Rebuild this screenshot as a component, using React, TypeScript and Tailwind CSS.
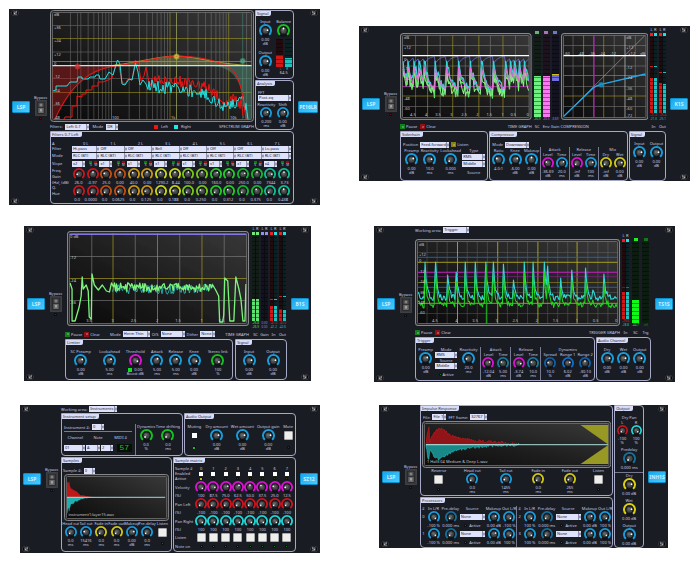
import React from "react";

const BLUE = "#1a9cd8";
const MAGENTA = "#dc12d2";
const GREEN = "#14c020";
const YELLOW = "#d0c818";
const RED = "#d01420";
const CYAN = "#20d8d8";

type Pt = [number, number];

function rnd(i: number) {
  const s = Math.sin(i * 127.1 + 11.7) * 43758.5453;
  return s - Math.floor(s);
}

function toPath(points: Pt[]) {
  return points.map(([x, y]) => `${x.toFixed(1)},${y.toFixed(1)}`).join(" ");
}

function along(points: Pt[], step: number, noise: number, seed: number): Pt[] {
  const out: Pt[] = [];
  for (let k = 0; k < points.length - 1; k++) {
    const [x0, y0] = points[k];
    const [x1, y1] = points[k + 1];
    for (let x = x0; x < x1; x += step) {
      const t = (x - x0) / (x1 - x0);
      out.push([x, y0 + (y1 - y0) * t + (rnd(x * 3.3 + seed) - 0.5) * noise]);
    }
  }
  return out;
}

function decays(peaks: Pt[], end: number, floor: number, tau: number, noise: number, seed: number): Pt[] {
  const out: Pt[] = [];
  peaks.forEach(([px, py], i) => {
    const stop = i < peaks.length - 1 ? peaks[i + 1][0] : end;
    for (let x = px; x < stop - 0.6; x += 1) {
      const y = floor - (floor - py) * Math.exp(-(x - px) / tau);
      out.push([x, x === px ? y : y + (rnd(x * 1.9 + seed) - 0.5) * noise]);
    }
  });
  return out;
}

/* ---------- small controls ---------- */

function Knob({ name, color = BLUE, size = "size-[13px]", turn = 60 }: { name: string; color?: string; size?: string; turn?: number }) {
  const a = ((turn - 90) * Math.PI) / 180;
  return (
    <span className={`relative block shrink-0 ${size}`}>
      <svg viewBox="0 0 26 26" className="block size-full">
        <circle cx="13" cy="13" r="10.5" fill="none" stroke="#101218" strokeWidth="5" />
        <path d="M6 21.5 A11 11 0 1 1 20 21.5" fill="none" stroke={color} strokeWidth="4" />
        <circle cx="13" cy="13" r="7.8" fill="#141618" />
        <circle cx="13" cy="13" r="6.2" fill="#444648" />
        <circle cx="12" cy="12" r="3" fill="#66686a" />
        <circle cx={13 + Math.cos(a) * 4} cy={13 + Math.sin(a) * 4} r="1.8" fill="#fff" />
      </svg>
      <input type="range" aria-label={name} defaultValue={50} className="absolute inset-0 size-full opacity-0" />
    </span>
  );
}

function Param({ label, value, unit, color, size, turn, grow = "flex-1" }: { label: string; value: string; unit?: string; color?: string; size?: string; turn?: number; grow?: string }) {
  return (
    <div className={`flex min-w-0 flex-col items-center ${grow}`}>
      <span className="leading-[5px]">{label}</span>
      <Knob name={label} color={color} size={size} turn={turn} />
      <span className="mt-px leading-[4px]">{value}</span>
      {unit && <span className="leading-[4px]">{unit}</span>}
    </div>
  );
}

function Pick({ name, value, width = "w-full" }: { name: string; value: string; width?: string }) {
  return (
    <span className={`flex h-[6px] shrink-0 bg-[#dfe2fb] text-[#20222c] ${width}`}>
      <select aria-label={name} className="h-[6px] min-w-0 flex-1 appearance-none pl-px text-[4px] leading-[6px]">
        <option>{value}</option>
      </select>
      <svg viewBox="0 0 6 12" className="h-[6px] w-[3px] border-l border-[#8d90aa]">
        <path d="M1 5 L3 1 L5 5Z M1 7 L3 11 L5 7Z" fill="#20222c" />
      </svg>
    </span>
  );
}

function Led({ color, glow = "size-px" }: { color: string; glow?: string }) {
  return (
    <span className="flex size-[3px] items-center justify-center rounded-full bg-[#0c0d10]">
      <span className={`rounded-full ${glow} ${color}`} />
    </span>
  );
}

function Lamp({ name, color, text }: { name: string; color: string; text?: string }) {
  return (
    <button className="flex items-center gap-px leading-[5px]" aria-label={name}>
      <span className={`flex size-[5px] items-center justify-center ${color}`}>
        <span className="size-[2px] bg-white/25" />
      </span>
      {text && <span>{text}</span>}
    </button>
  );
}

function PadButton({ name }: { name: string }) {
  return <button aria-label={name} className="size-[9px] rounded-[1px] border border-[#a9a9a9] bg-[#eeeeec]" />;
}

function Group({ title, className = "", body = "", children }: { title: string; className?: string; body?: string; children: React.ReactNode }) {
  return (
    <section className={`flex min-w-0 flex-col rounded-[4px] rounded-tl-none border border-[#a6a9c6] ${className}`}>
      <h3 className="h-[5px] self-start rounded-br-[2px] bg-[#d9dcf6] pr-[3px] pl-px leading-[5px] text-[#2a2c38]">{title}</h3>
      <div className={`min-w-0 flex-1 ${body}`}>{children}</div>
    </section>
  );
}

function Screw({ flip = false }: { flip?: boolean }) {
  return (
    <svg viewBox="0 0 16 12" className={`h-[6px] w-[8px] ${flip ? "-scale-x-100" : ""}`}>
      <ellipse cx="8" cy="6" rx="7.4" ry="5.6" fill="#050506" stroke="#5a5c62" strokeWidth="1" />
      <circle cx="8.6" cy="6" r="4" fill="#77797d" />
      <path d="M6 3 L11 9 M11.5 3 L5.5 8.5" stroke="#d4d4d4" strokeWidth="1.3" />
      <path d="M8 1 L8 6 L12 8" stroke="#111" strokeWidth="1.4" fill="none" />
    </svg>
  );
}

function Badge({ text, width = "w-[18px]" }: { text: string; width?: string }) {
  return (
    <div className={`flex h-[12px] items-center justify-center rounded-[1px] border border-[#0c90cc] bg-linear-to-br from-[#14a8ec] to-[#48caff] text-[5px] leading-[6px] font-bold text-[#c8f0ff] ${width}`}>
      {text}
    </div>
  );
}

function Plugin({ name, badge, className, children }: { name: string; badge?: string; className: string; children: React.ReactNode }) {
  return (
    <article className={`flex min-w-0 bg-[#1a1c24] ${className}`}>
      <div className="flex w-[41px] shrink-0 flex-col justify-between pt-px pb-px pl-[2px]">
        <Screw />
        <div className="flex items-center gap-[4px] pl-px">
          <Badge text="LSP" />
          <label className="flex flex-col items-center">
            <span className="leading-[5px]">Bypass</span>
            <input type="checkbox" className="peer sr-only" />
            <svg viewBox="0 0 24 32" className="h-[16px] w-[12px]">
              <rect x="0.5" y="0.5" width="23" height="31" rx="2" fill="#38393b" stroke="#5c5d5e" />
              <rect x="5" y="4" width="14" height="23" fill="#1c1d20" />
              <rect x="6.5" y="5" width="11" height="10" fill="#4a4b4d" />
              <rect x="6.5" y="16" width="11" height="10" fill="#68696b" />
              <circle cx="12" cy="10" r="2" fill="none" stroke="#c8c8c8" />
              <path d="M12 18 V23" stroke="#d8d8d8" strokeWidth="2" />
            </svg>
            <span className="mt-px">
              <Led color="bg-[#a01818]" />
            </span>
          </label>
        </div>
        <Screw />
      </div>
      <div className="flex min-w-0 flex-1 flex-col">{children}</div>
      <div className={`flex shrink-0 flex-col items-end justify-between py-px pr-[2px] ${badge ?? "w-[24px]"}`}>
        <Screw flip />
        <Badge text={name} width={badge ? "w-[20px]" : "w-[18px]"} />
        <Screw flip />
      </div>
    </article>
  );
}

/* ---------- level meters ---------- */

function Bar({ color, dim, level, peak }: { color: string; dim: string; level: string; peak?: string }) {
  return (
    <div className={`relative flex min-w-0 flex-1 flex-col justify-end ${dim}`}>
      <div className={`${color} ${level}`} />
      {peak && <div className={`absolute inset-x-0 h-px ${color} ${peak}`} />}
      <div className="absolute inset-0 bg-[repeating-linear-gradient(to_top,transparent_0_3px,#00000068_3px_4px)]" />
    </div>
  );
}

function Meter({ label, caps, led, bars, values, width = "w-[7px]" }: { label: string; caps?: boolean; led: string[]; bars: React.ReactNode; values: [string, string][]; width?: string }) {
  return (
    <div className={`flex shrink-0 flex-col items-center ${width}`}>
      {caps && (
        <div className="flex w-full justify-around leading-[4px]">
          <span>L</span>
          <span>R</span>
        </div>
      )}
      <div className="flex w-full justify-around py-px">
        {led.map((c, i) => (
          <span key={i} className={`h-[3px] ${led.length > 1 ? "w-[3px]" : "w-[4px]"} ${c}`} />
        ))}
      </div>
      <div className="flex w-full flex-1 gap-px bg-[#0b0c10]">{bars}</div>
      <div className="flex flex-col items-center text-[3px] leading-[4px]">
        {values.map(([v, c], i) => (
          <span key={i} className={c}>{v}</span>
        ))}
      </div>
      <span className="mt-[3px] leading-[5px] whitespace-nowrap">{label}</span>
    </div>
  );
}

/* ---------- graphs ---------- */

function Scope({ x, y, w, h, className, id, title, children }: { x: number; y: number; w: number; h: number; className: string; id: string; title: string; children: React.ReactNode }) {
  return (
    <svg viewBox={`${x} ${y} ${w} ${h}`} preserveAspectRatio="none" className={`block w-full shrink-0 ${className}`} role="img" aria-label={title}>
      <defs>
        <linearGradient id={id} x1="0" y1="1" x2="1" y2="0">
          <stop offset="0" stopColor="#0c0c0d" />
          <stop offset="0.45" stopColor="#1e1e1f" />
          <stop offset="1" stopColor="#393939" />
        </linearGradient>
        <clipPath id={`${id}c`}>
          <rect x={x + 2.5} y={y + 2.5} width={w - 5} height={h - 5} />
        </clipPath>
      </defs>
      <rect x={x + 0.5} y={y + 0.5} width={w - 1} height={h - 1} rx="3" fill="#2a2a2c" stroke="#85878a" />
      <rect x={x + 2.5} y={y + 2.5} width={w - 5} height={h - 5} rx="1" fill={`url(#${id})`} stroke="#727272" strokeWidth="0.8" />
      <g clipPath={`url(#${id}c)`}>{children}</g>
    </svg>
  );
}

function Lines({ v = [], h = [], x, y, color, o = 1, w = 0.7 }: { v?: number[]; h?: number[]; x: Pt; y: Pt; color: string; o?: number; w?: number }) {
  return (
    <g stroke={color} strokeWidth={w} opacity={o}>
      {v.map((k) => <line key={`v${k}`} x1={k} x2={k} y1={y[0]} y2={y[1]} />)}
      {h.map((k) => <line key={`h${k}`} x1={x[0]} x2={x[1]} y1={k} y2={k} />)}
    </g>
  );
}

function Marks({ items }: { items: [number, number, string][] }) {
  return (
    <g fill="#c4c6cc" fontSize="4">
      {items.map(([x, y, t]) => <text key={`${x}-${y}`} x={x} y={y}>{t}</text>)}
    </g>
  );
}

function Node({ x, y, color }: { x: number; y: number; color: string }) {
  return (
    <g>
      <circle cx={x} cy={y} r="3" fill={color} opacity="0.55" />
      <circle cx={x} cy={y} r="1.5" fill="none" stroke={color} />
    </g>
  );
}

function Trace({ pts, color, w = 0.8, o = 1 }: { pts: Pt[]; color: string; w?: number; o?: number }) {
  return <polyline points={toPath(pts)} fill="none" stroke={color} strokeWidth={w} opacity={o} strokeLinejoin="round" />;
}

function SpectrumGraph() {
  const X: Pt = [52, 252];
  const Y: Pt = [12, 120];
  const grid: number[] = [];
  for (let d = 0; d < 4; d++) for (let k = 2; k < 10; k++) grid.push(52.8 + 58.7 * (d + Math.log10(k)));
  const red: Pt[] = [
    [64, 119], [65, 117], [72, 117], [72, 106], [77, 106], [77, 96], [82, 97], [82, 94], [86, 94], [86, 90], [92, 90], [92, 86], [98, 86], [98, 82], [103, 82], [108, 80], [112, 78], [116, 64], [119, 66], [122, 82], [125, 84], [128, 79], [132, 80], [135.5, 60], [139, 68], [141, 81], [144, 76], [146, 67], [149, 82],
    ...along([[151, 79], [180, 82], [205, 87], [216, 95], [226, 105], [234, 99], [241, 104], [245, 119]], 1, 13, 4),
  ];
  const cyan: Pt[] = [
    [53, 91], [56, 90], [56, 86], [67, 86], [70, 82], [77, 82], [78, 77], [82, 77], [82, 79], [88, 79], [90, 77], [95, 77], [96, 75], [99, 75], [100, 79], [105, 79], [109, 72], [113, 75], [117.5, 60], [120, 64], [122, 84], [125, 85], [129, 79], [132, 80], [135.5, 63], [138, 72], [140, 85], [143, 80], [146, 84],
    ...along([[148, 86], [175, 89], [205, 93], [216, 101], [226, 108], [235, 104], [242, 98], [249, 117]], 1, 13, 30),
  ];
  return (
    <Scope x={50} y={10} w={204} h={112} className="h-[112px]" id="g1" title="Spectrum graph">
      <Lines v={grid} h={[25.5, 52, 78.5, 105.5]} x={X} y={Y} color="#8a8a8a" o={0.6} w={0.7} />
      <Lines v={[111.5, 170, 228.7]} h={[38.5, 92.5]} x={X} y={Y} color="#b0a820" o={0.75} />
      <Lines v={[77.5]} x={X} y={Y} color="#c03030" />
      <Lines v={[176.5]} x={X} y={Y} color="#a8b060" />
      <Lines v={[242.7]} x={X} y={Y} color="#3c7a6a" />
      <path d="M52 66 H118 C90 70 72 86 55 120 H52Z" fill="#c81c1c" opacity="0.38" />
      <path d="M112 66 C140 62 160 56 177 56 C200 57 215 64 250 65.7Z" fill="#98a060" opacity="0.42" />
      <path d="M210 66 H252 V120 H246 C243 90 240 66 210 66Z" fill="#5a9a80" opacity="0.42" />
      <Trace pts={red} color="#f01414" w={1} />
      <Trace pts={cyan} color="#20e0e0" w={1} />
      <path d="M112 65.5 C140 62 160 56 177 56 C200 57 215 64 252 65.5" fill="none" stroke="#c8c040" strokeWidth="0.7" />
      <path d="M55 119 C72 82 90 70 115 66 C140 63 160 56 177 56.2 C200 56 222 62 232 69 C242 80 243 100 246 120" fill="none" stroke="#f01818" strokeWidth="1" />
      <Lines h={[61.5]} x={X} y={Y} color="#50b890" />
      <Lines h={[65.7]} x={X} y={Y} color="#b0f0f0" w={1.2} />
      <Node x={77.5} y={66.5} color="#e03030" />
      <Node x={176.5} y={56.5} color="#c8c840" />
      <Node x={242.7} y={61} color="#50a888" />
      <Marks items={[[54, 16, "dB"], [54, 29, "+36"], [54, 42, "+24"], [54, 56, "+12"], [54, 65, "0"], [54, 78, "-12"], [54, 92, "-24"], [54, 105, "-36"], [54, 119, "-48"], [112, 118.5, "100"], [171, 118.5, "1k"], [230, 118.5, "10k"]]} />
    </Scope>
  );
}

function CompressorTimeGraph() {
  const X: Pt = [402, 529];
  const Y: Pt = [34, 116];
  const on = [403, 408, 414, 419, 424.3, 435, 446.5, 458.3, 470, 481, 493, 505, 510, 514, 519, 524];
  const from = (top: number) => on.map((p) => [p, top] as Pt);
  const gain: Pt[] = decays(from(62), 529, 58, 1, 0, 0).map(([px]) => {
    const start = on.filter((p) => p <= px).pop() ?? on[0];
    return [px, 55 + 8 * Math.exp(-(px - start) / 4)];
  });
  return (
    <Scope x={400} y={32} w={131} h={87} className="h-[87px]" id="g2" title="Time graph">
      <Lines v={[415.5, 440, 465, 490, 515]} h={[44.5, 65, 85.5, 105.5]} x={X} y={Y} color="#8a8a8a" o={0.7} />
      <Lines v={[427.5, 452.5, 478.5, 502.5]} h={[74.5, 95]} x={X} y={Y} color="#b0a820" o={0.8} />
      <Lines h={[85.7]} x={X} y={Y} color="#c020b8" />
      <Trace pts={gain} color="#6c70e0" />
      <Trace pts={decays(from(68), 529, 95, 5, 12, 3)} color="#60e060" w={1.3} />
      <Trace pts={decays(from(60), 529, 91, 4.5, 11, 9)} color="#30d8d8" w={1.2} />
      <Trace pts={decays(from(72), 529, 94, 4, 10, 19)} color="#80f080" w={1} />
      <Trace pts={decays(from(66), 529, 91, 5, 2, 5)} color="#e868d8" w={1} />
      <Lines h={[54.7]} x={X} y={Y} color="#ffffff" w={1.3} />
      <Marks items={[[404, 38, "dB"], [404, 48, "+12"], [404, 60, "0"], [404, 69, "-12"], [404, 79, "-24"], [404, 99, "-48"], [404, 109, "-60"], [410, 115.5, "4.5"], [425, 115.5, "4"], [435, 115.5, "3.5"], [450, 115.5, "3"], [461, 115.5, "2.5"], [476, 115.5, "2"], [486, 115.5, "1.5"], [501, 115.5, "1"], [510, 115.5, "0.5"], [526, 115.5, "0"]]} />
    </Scope>
  );
}

function CurveGraph() {
  const X: Pt = [562, 645];
  const Y: Pt = [34, 117];
  return (
    <Scope x={560} y={32} w={87} h={87} className="h-[87px]" id="g3" title="Compression curve">
      <Lines v={[572, 592.7, 613, 634]} h={[44.5, 65, 85.5, 105.5]} x={X} y={Y} color="#8a8a8a" o={0.7} />
      <Lines v={[582.5, 602.5]} h={[74.5, 95]} x={X} y={Y} color="#b0a820" o={0.8} />
      <Lines v={[592.7]} x={X} y={Y} color="#c818c0" w={1.1} />
      <Lines v={[623.7]} x={X} y={Y} color="#c8c8c8" />
      <line x1="562" y1="116" x2="645" y2="33" stroke="#9a9a9a" strokeWidth="0.7" />
      <path d="M562.5 115.5 L592 87 Q595 84.6 600 83.4 L644 73" fill="none" stroke="#20a8e8" strokeWidth="1.3" />
      <Node x={600} y={83.7} color="#1890c8" />
      <Lines h={[54.7]} x={X} y={Y} color="#ffffff" w={1.3} />
      <Marks items={[[625, 38, "dB"], [625, 48, "+12"], [563, 54, "-60"], [577, 54, "-48"], [588, 54, "-36"], [598, 54, "-24"], [609, 54, "-12"], [627, 54, "+12"], [639, 54, "dB"], [625, 68, "-12"], [625, 78, "-24"], [625, 89, "-36"], [625, 99, "-48"], [625, 109, "-60"], [625, 116, "-72"]]} />
    </Scope>
  );
}

function LimiterGraph() {
  const X: Pt = [69, 245];
  const Y: Pt = [234, 325];
  const pts: Pt[] = [
    [70, 284], [72, 290], [72, 322], [75, 322], [79, 308], [81, 297], [82, 278], [83, 290], [86, 286], [88, 292], [89, 318], [91, 320], [91.7, 275], [94, 286], [98, 291], [102, 286], [106, 292], [109, 293], [111, 284],
    ...along([[113, 288], [160, 289], [212, 288]], 1, 9, 2),
    [214, 291], [217, 297], [218, 323], [221, 323], [222, 316], [223, 279], [226, 282], [228, 322], [232, 322], [234, 278], [237, 290], [239, 300], [241, 322], [243, 322], [244, 285],
  ];
  return (
    <Scope x={67} y={232} w={180} h={95} className="h-[95px]" id="g4" title="Time graph">
      <Lines v={[91.5, 134.5, 178.5, 222.5]} h={[257.5, 301.5]} x={X} y={Y} color="#8a8a8a" o={0.8} />
      <Lines v={[112.5, 156.5, 200.5]} h={[279.5]} x={X} y={Y} color="#b0a820" o={0.9} />
      <Trace pts={along([[112, 290], [160, 291], [212, 289]], 1, 9, 8)} color="#28c8c8" />
      <Trace pts={pts} color="#7cf47c" w={1.3} />
      <Lines h={[235.5]} x={X} y={Y} color="#8078e0" w={1.2} />
      <Marks items={[[70, 239, "0 dB"], [70, 260, "-12"], [70, 283, "-24"], [70, 305, "-36"], [86, 323.5, "3.5"], [111, 323.5, "3"], [130, 323.5, "2.5"], [155, 323.5, "2"], [174, 323.5, "1.5"], [199, 323.5, "1"], [217, 323.5, "0.5"]]} />
    </Scope>
  );
}

function TriggerGraph() {
  const X: Pt = [418, 617];
  const Y: Pt = [242, 324];
  const peaks: Pt[] = [[418, 292], [425, 262], [435.5, 262], [447.5, 275], [456, 272], [465, 262], [475, 262], [485.5, 262], [493, 262], [503, 264], [513, 280], [523.7, 262], [532.5, 262], [543.7, 262], [547, 266], [560, 278], [571, 270], [584.7, 268], [592, 290], [603, 274]];
  return (
    <Scope x={415} y={239} w={204} h={87} className="h-[87px]" id="g5" title="Trigger graph">
      <Lines v={[427, 437, 447, 467, 477, 487, 507, 517, 527, 547, 557, 567, 587, 597, 607]} h={[252.5, 292.5, 313.5]} x={X} y={Y} color="#8a8a8a" o={0.5} w={0.6} />
      <Lines v={[457.3, 497.3, 537.3, 576.3]} h={[262.3, 303.3]} x={X} y={Y} color="#c0b820" o={0.9} w={0.9} />
      <Lines h={[257.3, 287.3]} x={X} y={Y} color="#2068b0" w={0.9} />
      <Lines h={[272.3]} x={X} y={Y} color="#c820c0" w={1} />
      <Lines h={[276.7]} x={X} y={Y} color="#802080" w={0.8} />
      <Lines h={[282.5]} x={X} y={Y} color="#807020" w={0.8} />
      <Trace pts={decays(peaks, 617, 298, 1.6, 6, 6)} color="#30d8d8" w={1.1} />
      <Trace pts={decays(peaks.map(([x, y]) => [x, y + 10] as Pt), 617, 305, 1.5, 6, 14)} color="#20d820" w={1} />
      <line x1="486" y1="265" x2="486" y2="324" stroke="#20b820" />
      <Marks items={[[419, 246, "dB"], [419, 256, "+12"], [419, 262, "0"], [419, 273, "-12"], [419, 283, "-24"], [419, 294, "-36"], [419, 304, "-48"], [419, 314, "-60"], [432, 322.5, "4.5"], [455, 322.5, "4"], [472, 322.5, "3.5"], [495, 322.5, "3"], [512, 322.5, "2.5"], [535, 322.5, "2"], [552, 322.5, "1.5"], [575, 322.5, "1"], [592, 322.5, "0.5"], [614, 322.5, "0"]]} />
    </Scope>
  );
}

function envelope(x0: number, x1: number, mid: number, amp: number, tau: number, seed: number, dir: number): string {
  const pts: Pt[] = [[x0, mid]];
  for (let x = x0; x <= x1; x += 0.5) {
    const a = amp * Math.exp(-(x - x0) / tau) * (0.65 + 0.5 * rnd(Math.floor(x) * 2.7 + seed));
    pts.push([x, mid + dir * a]);
  }
  pts.push([x1, mid]);
  return toPath(pts);
}

function SampleGraph() {
  return (
    <Scope x={63} y={474} w={107} h={47} className="h-[47px]" id="g6" title="Sample waveform">
      <polygon points={envelope(66, 110, 497.3, 21, 7, 2, -1)} fill="#c01818" />
      <polygon points={envelope(66, 110, 497.3, 18, 7, 8, 1)} fill="#20b0b0" />
      <Lines h={[497.3]} x={[66, 166]} y={[0, 0]} color="#a8f0f0" w={0.9} />
      <Marks items={[[67.5, 516, "instrument1:layer15.wav"]]} />
    </Scope>
  );
}

function ImpulseGraph() {
  const top: Pt[] = [[426, 444], [427, 436], [428, 432], [429, 426], [430, 443], [432, 436], [434, 434], [437, 430], [440, 428], [444, 430], [450, 435], [458, 438], [470, 440], [490, 442], [520, 444]];
  const low: Pt[] = [[426, 445], [427, 452], [428, 458], [429, 459], [430, 450], [434, 456], [439, 460], [444, 456], [450, 453], [458, 450], [470, 448], [490, 446], [520, 445]];
  return (
    <Scope x={422} y={421} w={191} h={47} className="h-[47px]" id="g7" title="Impulse response waveform">
      <polygon points={`426,444.7 ${toPath(along(top, 0.8, 3, 3))} 520,444.7`} fill="#901418" stroke="#e01c1c" strokeWidth="0.5" />
      <polygon points={`426,444.7 ${toPath(along(low, 0.8, 2.6, 7))} 520,444.7`} fill="#188888" stroke="#30d0d0" strokeWidth="0.5" />
      <polygon points="582,425 610,425 610,444.5" fill="#989824" />
      <polygon points="582,464 610,464 610,445" fill="#989824" />
      <Lines h={[444.7]} x={[426, 610]} y={[0, 0]} color="#b8f4f0" w={0.9} />
      <Marks items={[[427, 463.5, "1 Halls 04 Medium & Deep L.wav"]]} />
    </Scope>
  );
}

/* ---------- plugins ---------- */

const FILTERS = [
  { t: "Hi-pass", s: "x2", c: "#c81820", a: "26.0", b: "-0.97", q: "0.0", m: "0.0000" },
  { t: "Off", s: "x1", c: "#c05014", a: "25.0", b: "0.00", q: "0.0", m: "0.0625" },
  { t: "Off", s: "x1", c: "#c89818", a: "40.0", b: "0.00", q: "0.0", m: "0.125" },
  { t: "Bell", s: "x1", c: "#c8d818", a: "1290.2", b: "8.44", q: "0.0", m: "0.188" },
  { t: "Off", s: "x1", c: "#78c818", a: "100.0", b: "0.00", q: "0.0", m: "0.250" },
  { t: "Off", s: "x1", c: "#20d028", a: "160.0", b: "0.00", q: "0.0", m: "0.312" },
  { t: "Off", s: "x1", c: "#14b830", a: "250.0", b: "0.00", q: "0.0", m: "0.375" },
  { t: "Lo-pass", s: "x4", c: "#10c090", a: "7344", b: "3.73", q: "0.0", m: "0.438" },
];

function Equalizer() {
  return (
    <Plugin name="PE16LR" badge="w-[26px]" className="flex-[311]">
      <div className="flex pt-px">
        <div className="min-w-0 flex-[204]">
          <SpectrumGraph />
          <div className="flex h-[9px] items-center gap-[3px] leading-[5px]">
            <span>Filters:</span>
            <Pick name="Filters" value="Left 0-7" width="w-[24px]" />
            <span>Mode</span>
            <Pick name="Mode" value="IIR" width="w-[12px]" />
            <span className="ml-auto size-[4px] bg-[#f01414]" />
            <span>Left</span>
            <span className="ml-[3px] size-[4px] bg-[#20e8e8]" />
            <span>Right</span>
            <span className="ml-[25px]">SPECTRUM GRAPH</span>
          </div>
        </div>
        <div className="ml-px flex min-w-0 flex-[39] flex-col gap-px">
          <Group title="Signal" className="h-[69px]" body="flex pt-[3px]">
            <div className="flex flex-1 flex-col gap-[2px]">
              <Param label="Input" value="0.00" unit="dB" turn={80} />
              <Param label="Output" value="0.00" unit="dB" turn={80} />
            </div>
            <div className="flex flex-1 flex-col items-center">
              <span className="leading-[5px]">Balance</span>
              <Knob name="Balance" color={GREEN} turn={0} />
              <div className="mt-[2px] flex h-[28px] w-[16px] gap-[2px]">
                <Bar color="bg-[#d01818]" dim="bg-[#200c0e]" level="h-[12px]" />
                <Bar color="bg-[#20c0c0]" dim="bg-[#0a2022]" level="h-[9px]" />
              </div>
              <div className="flex w-[14px] justify-around text-[3px] leading-[4px]">
                <span className="text-[#e02020]">L</span>
                <span className="text-[#20d0d0]">R</span>
              </div>
              <span className="leading-[4px]">64.5</span>
            </div>
          </Group>
          <Group title="Analysis" className="h-[50px]" body="flex flex-col px-[2px] pt-[4px]">
            <span className="leading-[5px]">FFT</span>
            <Pick name="FFT" value="Post-eq" />
            <div className="flex pt-px">
              <Param label="Reactivity" value="0.200" unit="ms" size="size-[12px]" turn={60} />
              <Param label="Shift" value="0.00" unit="dB" size="size-[12px]" turn={50} />
            </div>
          </Group>
        </div>
      </div>
      <Group title="Filters 0-7 Left" className="mb-px" body="flex pt-[4px] pb-px pl-px pr-[2px]">
        <div className="flex w-[20px] shrink-0 flex-col leading-[5px]">
          <span>A</span>
          <span className="h-[6px] leading-[6px]">Filter</span>
          <span className="mt-px h-[6px] leading-[6px]">Mode</span>
          <span className="h-[9px] leading-[9px]">Slope</span>
          <span>Freq.</span>
          <span className="h-[7px] leading-[7px]">Gain</span>
          <span className="whitespace-nowrap">(Hz), (dB)</span>
          <span>Q.</span>
          <span className="h-[7px] leading-[7px]">Hue</span>
        </div>
        {FILTERS.map((f, i) => (
          <div key={i} className="flex min-w-0 flex-1 flex-col">
            <span className="text-center leading-[5px]">{i} L</span>
            <Pick name={`Filter ${i}`} value={f.t} />
            <span className="mt-px">
              <Pick name={`Filter ${i} mode`} value="RLC (BT)" />
            </span>
            <div className="flex h-[9px] items-center justify-between pr-[2px]">
              <Pick name={`Filter ${i} slope`} value={f.s} width="w-[13px]" />
              <div className="flex gap-[2px] text-[3px] leading-[3px]">
                <label className="flex flex-col items-center">
                  <input type="checkbox" className="size-[3px] appearance-none bg-[#0a7a14]" />S
                </label>
                <label className="flex flex-col items-center">
                  <input type="checkbox" className="size-[3px] appearance-none bg-[#901018]" />M
                </label>
              </div>
            </div>
            <div className="flex justify-around">
              <Knob name="Frequency" color={f.c} size="size-[12px]" turn={-100 + i * 28} />
              <Knob name="Gain" color={f.c} size="size-[12px]" turn={0} />
            </div>
            <div className="flex justify-around leading-[5px]">
              <span>{f.a}</span>
              <span>{f.b}</span>
            </div>
            <div className="flex justify-around">
              <Knob name="Quality" color={f.c} size="size-[12px]" turn={-135} />
              <Knob name="Hue" color={f.c} size="size-[12px]" turn={-135 + i * 18} />
            </div>
            <div className="flex justify-around leading-[5px]">
              <span>{f.q}</span>
              <span>{f.m}</span>
            </div>
          </div>
        ))}
      </Group>
    </Plugin>
  );
}

function Pair({ title, items, grow = "flex-[28]", size = "size-[12px]" }: { title: string; grow?: string; size?: string; items: [string, string, string, string?, number?][] }) {
  return (
    <div className={`flex min-w-0 flex-col border-l border-[#777a90] ${grow}`}>
      <span className="text-center leading-[5px]">{title}</span>
      <div className="flex">
        {items.map(([l, v, u, c, t]) => (
          <Param key={l} label={l} value={v} unit={u} color={c} size={size} turn={t} />
        ))}
      </div>
    </div>
  );
}

const RED_BAR = "bg-[#d01818]";
const CYAN_BAR = "bg-[#20c0c0]";
const RED_DIM = "bg-[#200c0e]";
const CYAN_DIM = "bg-[#0a2022]";

function Compressor() {
  return (
    <Plugin name="K1S" className="mt-[17px] flex-[331]">
      <div className="flex items-end gap-[2px] pt-[2px] pb-[2px]">
        <div className="min-w-0 flex-[131]">
          <CompressorTimeGraph />
          <div className="mt-[4px] flex items-center gap-[3px] leading-[5px]">
            <Lamp name="Pause" color="bg-[#108018]" text="Pause" />
            <Lamp name="Clear" color="bg-[#901018]" text="Clear" />
            <span className="ml-auto">TIME GRAPH</span>
          </div>
        </div>
        <div className="flex h-[99px] gap-[2px]">
          <Meter label="SC" led={["bg-[#60b868]"]} values={[["-20.9", "text-[#50e050]"]]} bars={<Bar color="bg-[#70f080]" dim="bg-[#131d18]" level="h-[41px]" />} />
          <Meter label="Env" led={["bg-[#b070b8]"]} values={[["-20.5", "text-[#e060e0]"]]} bars={<Bar color="bg-[#f878f0]" dim="bg-[#1d131e]" level="h-[41px]" />} />
          <Meter label="Gain" led={["bg-[#7078c0]"]} values={[["-3.69", "text-[#8080e8]"]]} bars={<Bar color="bg-[#7070e0]" dim="bg-[#13131f]" level="mb-[36px] h-[7px] border-t border-[#d0c020]" />} />
        </div>
        <div className="min-w-0 flex-[87]">
          <CurveGraph />
          <div className="mt-[4px] leading-[5px]">COMPRESSION</div>
        </div>
        <div className="flex h-[101px] gap-[2px]">
          <Meter label="In" caps led={["bg-[#f02020]", "bg-[#20e0e0]"]} values={[["-21.2", "text-[#e02020]"], ["-21.0", "text-[#20c0c0]"]]} bars={<><Bar color={RED_BAR} dim={RED_DIM} level="h-[35px]" peak="bottom-[46px]" /><Bar color={CYAN_BAR} dim={CYAN_DIM} level="h-[35px]" peak="bottom-[46px]" /></>} />
          <Meter label="Out" caps led={["bg-[#f02020]", "bg-[#20e0e0]"]} values={[["-25.4", "text-[#e02020]"], ["-25.1", "text-[#20c0c0]"]]} bars={<><Bar color={RED_BAR} dim={RED_DIM} level="h-[30px]" peak="bottom-[40px]" /><Bar color={CYAN_BAR} dim={CYAN_DIM} level="h-[29px]" peak="bottom-[40px]" /></>} />
        </div>
      </div>
      <div className="flex h-[50px] gap-px">
        <Group title="Sidechain" className="flex-[88]" body="flex flex-col pt-[4px] px-[2px]">
          <div className="flex h-[7px] items-center gap-[2px] leading-[5px]">
            <span>Position</span>
            <Pick name="Position" value="Feed-forward" width="w-[29px]" />
            <Lamp name="Listen" color="bg-[#888010]" text="Listen" />
          </div>
          <div className="flex">
            <Param label="Preamp" value="0.00" unit="dB" grow="flex-[17]" />
            <Param label="Reactivity" value="10.0" unit="ms" turn={80} grow="flex-[19]" />
            <Param label="Lookahead" value="0.000" unit="ms" turn={-140} grow="flex-[23]" />
            <div className="flex min-w-0 flex-[23] flex-col items-center gap-px">
              <span className="leading-[5px]">Type</span>
              <Pick name="Type" value="RMS" />
              <Pick name="Source" value="Middle" />
              <span className="mt-[2px] leading-[5px]">Source</span>
            </div>
          </div>
        </Group>
        <Group title="Compressor" className="flex-[139]" body="flex pt-[4px]">
          <div className="flex min-w-0 flex-[50] flex-col">
            <div className="flex h-[7px] items-center gap-[2px] pl-[2px] leading-[5px]">
              <span>Mode</span>
              <Pick name="Mode" value="Downward" width="w-[24px]" />
            </div>
            <div className="flex">
              <Param label="Ratio" value="4.0:1" turn={-60} />
              <Param label="Knee" value="-6.00" unit="dB" turn={60} />
              <Param label="Makeup" value="0.00" unit="dB" turn={0} />
            </div>
          </div>
          <div className="flex min-w-0 flex-[88] pt-[6px]">
            <Pair title="Attack" items={[["Level", "-36.69", "dB", MAGENTA, -60], ["Time", "20.0", "ms", BLUE, 50]]} />
            <Pair title="Release" items={[["Level", "-inf", "dB", MAGENTA, -135], ["Time", "100", "ms", BLUE, 70]]} />
            <Pair title="Mix" items={[["Dry", "-inf", "dB", YELLOW, -135], ["Wet", "0.00", "dB", YELLOW, 80]]} />
          </div>
        </Group>
        <Group title="Signal" className="flex-[36]" body="flex pt-[4px] pl-px">
          <Param label="Input" value="0.00" unit="dB" turn={80} />
          <Param label="Output" value="0.00" unit="dB" turn={80} />
        </Group>
      </div>
    </Plugin>
  );
}

function Limiter() {
  return (
    <Plugin name="B1S" className="flex-[287] self-start">
      <div className="flex items-end gap-[3px] pt-px pb-[2px]">
        <div className="min-w-0 flex-1">
          <div className="pl-[2px]">
            <LimiterGraph />
          </div>
          <div className="mt-[5px] flex h-[6px] items-center gap-[2px] leading-[5px] whitespace-nowrap">
            <Lamp name="Pause" color="bg-[#108018]" text="Pause" />
            <Lamp name="Clear" color="bg-[#901018]" text="Clear" />
            <span className="ml-auto">Mode</span>
            <Pick name="Mode" value="Herm Thin" width="w-[27px]" />
            <span>O/S</span>
            <Pick name="Oversampling" value="None" width="w-[24px]" />
            <span>Dither</span>
            <Pick name="Dither" value="None" width="w-[15px]" />
            <span className="ml-auto">TIME GRAPH</span>
          </div>
        </div>
        <div className="flex h-[110px] gap-[2px] pr-px">
          <Meter label="SC" caps led={["bg-[#70e878]", "bg-[#70e878]"]} values={[["-26.8", "text-[#50e050]"], ["-26.9", "text-[#50e050]"]]} bars={<><Bar color="bg-[#60e070]" dim="bg-[#131d18]" level="h-[22px]" /><Bar color="bg-[#60e070]" dim="bg-[#131d18]" level="h-[22px]" /></>} />
          <Meter label="Gain" caps led={["bg-[#9890e8]", "bg-[#9890e8]"]} values={[["0.00", "text-[#8080e8]"], ["0.00", "text-[#8080e8]"]]} bars={<><Bar color="bg-[#7070e0]" dim="bg-[#13131f]" level="h-0" /><Bar color="bg-[#7070e0]" dim="bg-[#13131f]" level="h-0" /></>} />
          <Meter label="In" caps led={["bg-[#f02020]", "bg-[#20e0e0]"]} values={[["-41.0", "text-[#e02020]"], ["-41.2", "text-[#20c0c0]"]]} bars={<><Bar color={RED_BAR} dim={RED_DIM} level="h-[15px]" peak="bottom-[21px]" /><Bar color={CYAN_BAR} dim={CYAN_DIM} level="h-[15px]" peak="bottom-[21px]" /></>} />
          <Meter label="Out" caps led={["bg-[#f02020]", "bg-[#20e0e0]"]} values={[["-42.0", "text-[#e02020]"], ["-42.6", "text-[#20c0c0]"]]} bars={<><Bar color={RED_BAR} dim={RED_DIM} level="h-[12px]" peak="bottom-[24px]" /><Bar color={CYAN_BAR} dim={CYAN_DIM} level="h-[11px]" peak="bottom-[24px]" /></>} />
        </div>
      </div>
      <div className="mb-px flex h-[41px] gap-[2px]">
        <Group title="Limiter" className="flex-[170]" body="flex pt-[4px]">
          <Param label="SC Preamp" value="0.00" unit="dB" turn={60} grow="flex-[30]" />
          <Param label="Lookahead" value="5.00" unit="ms" turn={50} grow="flex-[28]" />
          <div className="flex min-w-0 flex-[24] flex-col items-center">
            <span className="leading-[5px]">Threshold</span>
            <Knob name="Threshold" color={MAGENTA} turn={110} />
            <div className="mt-px flex items-center gap-[2px] leading-[4px]">
              <input type="checkbox" aria-label="Boost" defaultChecked className="size-[4px] appearance-none bg-[#10e020]" />
              <span>0.00</span>
            </div>
            <span className="leading-[4px]">Boost dB</span>
          </div>
          <Param label="Attack" value="5.00" unit="ms" turn={30} grow="flex-[20]" />
          <Param label="Release" value="5.00" unit="ms" turn={40} grow="flex-[18]" />
          <Param label="Knee" value="0.00" unit="dB" turn={110} grow="flex-[19]" />
          <Param label="Stereo link" value="100" unit="%" color={GREEN} turn={135} grow="flex-[29]" />
        </Group>
        <Group title="Signal" className="flex-[51]" body="flex pt-[4px] px-px">
          <Param label="Input" value="0.00" unit="dB" turn={80} />
          <Param label="Output" value="0.00" unit="dB" turn={80} />
        </Group>
      </div>
    </Plugin>
  );
}

function Trigger() {
  return (
    <Plugin name="TS1S" className="flex-[301]">
      <div className="flex h-[8px] items-center gap-[2px] leading-[5px]">
        <span>Working area:</span>
        <Pick name="Working area" value="Trigger" width="w-[26px]" />
      </div>
      <div className="flex items-end gap-[2px] pb-[2px]">
        <div className="min-w-0 flex-1">
          <TriggerGraph />
          <div className="mt-[4px] flex items-center gap-[3px] leading-[5px]">
            <Lamp name="Pause" color="bg-[#108018]" text="Pause" />
            <Lamp name="Clear" color="bg-[#901018]" text="Clear" />
            <span className="ml-auto">TRIGGER GRAPH</span>
          </div>
        </div>
        <div className="flex h-[101px] gap-[3px] pr-[2px]">
          <Meter label="In" caps led={["bg-[#f02020]", "bg-[#20e0e0]"]} values={[["-29.6", "text-[#e02020]"], ["-28.8", "text-[#20c0c0]"]]} bars={<><Bar color={RED_BAR} dim={RED_DIM} level="h-[27px]" peak="bottom-[31px]" /><Bar color={CYAN_BAR} dim={CYAN_DIM} level="h-[27px]" peak="bottom-[31px]" /></>} />
          <div className="flex gap-[3px] pt-[3px]">
            <Meter label="SC" led={["bg-[#20f020]"]} values={[["-44.7", "text-[#20e020]"]]} bars={<Bar color="bg-[#10f818]" dim="bg-[#0c1c10]" level="h-[23px]" />} />
            <Meter label="Trg" led={["bg-[#107818]"]} values={[["-inf", "text-[#109018]"]]} bars={<Bar color="bg-[#10f818]" dim="bg-[#0c1c10]" level="h-0" />} />
          </div>
        </div>
      </div>
      <div className="mb-px flex h-[44px] gap-px">
        <Group title="Trigger" className="flex-[181]" body="flex pt-[4px]">
          <Param label="Preamp" value="0.00" unit="dB" turn={60} grow="flex-[20]" />
          <div className="flex min-w-0 flex-[22] flex-col items-center">
            <span className="leading-[5px]">Mode</span>
            <Pick name="Mode" value="RMS" />
            <span className="leading-[5px]">Source</span>
            <Pick name="Source" value="Middle" />
            <span className="mt-[3px] flex items-center gap-px leading-[5px]">
              <Led color="bg-[#10a018]" />
              Active
            </span>
          </div>
          <Param label="Reactivity" value="20.0" unit="ms" turn={-100} grow="flex-[24]" />
          <Pair title="Attack" grow="flex-[30]" items={[["Level", "-12.04", "dB", MAGENTA, 60], ["Time", "5.00", "ms", "#187898", -60]]} />
          <Pair title="Release" grow="flex-[30]" items={[["Level", "-3.74", "dB", MAGENTA, 110], ["Time", "10.0", "ms", "#187898", -60]]} />
          <Pair title="Dynamics" grow="flex-[54]" items={[["Spread", "10.0", "%", "#1060a8", -80], ["Range 1", "6.02", "dB", "#1070c8", 70], ["Range 2", "-30.10", "dB", "#1060a8", 0]]} />
        </Group>
        <Group title="Audio Channel" className="flex-[54]" body="flex pt-[4px] px-[2px]">
          <Param label="Dry" value="0.00" unit="dB" turn={80} />
          <Param label="Wet" value="0.00" unit="dB" turn={80} />
          <Param label="Output" value="0.00" unit="dB" turn={80} />
        </Group>
      </div>
    </Plugin>
  );
}

const VELOCITY = ["100", "87.5", "75.0", "62.5", "50.0", "37.5", "25.0", "12.5"];

function MatrixRow({ label, className, children }: { label: string; className: string; children: (i: number) => React.ReactNode }) {
  return (
    <tr className={className}>
      <th scope="row" className="w-[20px] p-0 text-left font-normal whitespace-nowrap">{label}</th>
      {VELOCITY.map((_, i) => (
        <td key={i} className="p-0 text-center">
          <span className="flex items-center justify-center">{children(i)}</span>
        </td>
      ))}
    </tr>
  );
}

function Sampler() {
  return (
    <Plugin name="SZ12" className="flex-[300]">
      <div className="flex h-[8px] items-center gap-[2px] leading-[5px]">
        <span>Working area:</span>
        <Pick name="Working area" value="Instruments" width="w-[28px]" />
      </div>
      <div className="flex h-[43px] gap-px">
        <Group title="Instrument setup" className="flex-[122]" body="flex px-[2px] pt-[5px]">
          <div className="flex min-w-0 flex-[70] flex-col">
            <div className="flex h-[8px] items-center gap-[2px] border-b border-[#777a90] pb-px leading-[5px]">
              <span>Instrument #:</span>
              <Pick name="Instrument number" value="0" width="w-[12px]" />
            </div>
            <div className="mt-[3px] flex leading-[5px]">
              <span className="flex-1 text-center">Channel</span>
              <span className="flex-1 text-center">Note</span>
              <span className="flex-1 text-center">MIDI #</span>
            </div>
            <div className="mt-[4px] flex items-center gap-px">
              <Pick name="Channel" value="01" width="w-[21px]" />
              <Pick name="Note" value="A" width="w-[14px]" />
              <Pick name="Octave" value="2" width="w-[12px]" />
              <output className="ml-auto bg-[#051008] px-[3px] font-['Liberation_Mono',monospace] text-[8px] leading-[8px] text-[#10c820]">57</output>
            </div>
          </div>
          <div className="ml-[3px] flex min-w-0 flex-[45] border-l border-[#777a90] whitespace-nowrap">
            <Param label="Dynamics" value="0.0" unit="%" color={GREEN} turn={-135} grow="flex-[20]" />
            <Param label="Time drifting" value="0.0" unit="ms" color={GREEN} turn={-135} grow="flex-[24]" />
          </div>
        </Group>
        <Group title="Audio Output" className="flex-[112]" body="flex pt-[5px]">
          <div className="flex flex-[19] flex-col items-center">
            <span className="leading-[5px]">Muting</span>
            <input type="checkbox" aria-label="Muting" className="mt-[4px] size-[5px] appearance-none bg-white" />
            <span className="mt-[8px]"><Led color="bg-[#20f030]" glow="size-[2px]" /></span>
          </div>
          <Param label="Dry amount" value="0.00" unit="dB" turn={80} grow="flex-[26]" />
          <Param label="Wet amount" value="0.00" unit="dB" turn={80} grow="flex-[26]" />
          <Param label="Output gain" value="0.00" unit="dB" turn={80} grow="flex-[26]" />
          <div className="flex flex-[14] flex-col items-center">
            <span className="leading-[5px]">Mute</span>
            <span className="mt-[2px] flex"><PadButton name="Mute" /></span>
            <span className="mt-[6px]"><Led color="bg-[#a01818]" /></span>
          </div>
        </Group>
      </div>
      <div className="mt-px mb-px flex h-[95px] gap-px">
        <Group title="Samples" className="flex-[111]" body="flex flex-col pt-[4px] px-px">
          <div className="flex h-[7px] items-center gap-[2px] leading-[5px]">
            <span>Sample #:</span>
            <Pick name="Sample number" value="0" width="w-[11px]" />
          </div>
          <div className="px-px">
            <SampleGraph />
          </div>
          <div className="flex whitespace-nowrap">
            <Param label="Head cut" value="0.0" unit="ms" size="size-[12px]" turn={-135} />
            <Param label="Tail cut" value="15416" unit="ms" size="size-[12px]" turn={-80} />
            <Param label="Fade in" value="0.0" unit="ms" color={YELLOW} size="size-[12px]" turn={-135} />
            <Param label="Fade out" value="0.0" unit="ms" color={YELLOW} size="size-[12px]" turn={-135} />
            <Param label="Makeup" value="0.00" unit="dB" size="size-[12px]" turn={80} />
            <Param label="Pre-delay" value="0.0" unit="ms" size="size-[12px]" turn={-135} />
            <div className="flex flex-1 flex-col items-center">
              <span className="leading-[5px]">Listen</span>
              <span className="mt-[2px] flex"><PadButton name="Listen" /></span>
              <span className="mt-[5px]"><Led color="bg-[#10a018]" /></span>
            </div>
          </div>
        </Group>
        <Group title="Sample matrix" className="flex-[123]" body="pt-[3px] pl-px pr-[2px]">
          <table className="w-full table-fixed border-collapse">
            <colgroup>
              <col className="w-[20px]" />
            </colgroup>
            <tbody>
              <MatrixRow label="Sample #" className="h-[5px] leading-[5px]">{(i) => i}</MatrixRow>
              <MatrixRow label="Enabled" className="h-[5px] leading-[5px]">
                {(i) => <input type="checkbox" aria-label={`Enable sample ${i}`} className="size-[4px] appearance-none bg-white" />}
              </MatrixRow>
              <MatrixRow label="Active" className="h-[5px] leading-[5px]">
                {(i) => <Led color={i === 0 ? "bg-[#f0f020]" : "bg-[#505010]"} glow={i === 0 ? "size-[2px]" : "size-px"} />}
              </MatrixRow>
              <MatrixRow label="Velocity" className="h-[12px] leading-[5px]">
                {(i) => <Knob name={`Velocity ${i}`} color={MAGENTA} size="size-[12px]" turn={135 - i * 34} />}
              </MatrixRow>
              <MatrixRow label="(%)" className="h-[5px] leading-[5px]">{(i) => VELOCITY[i]}</MatrixRow>
              <MatrixRow label="Pan Left" className="h-[12px] leading-[5px]">
                {(i) => <Knob name={`Pan left ${i}`} color={RED} size="size-[12px]" turn={-135} />}
              </MatrixRow>
              <MatrixRow label="(%)" className="h-[5px] leading-[5px]">{() => "-100"}</MatrixRow>
              <MatrixRow label="Pan Right" className="h-[12px] leading-[5px]">
                {(i) => <Knob name={`Pan right ${i}`} color={CYAN} size="size-[12px]" turn={135} />}
              </MatrixRow>
              <MatrixRow label="(%)" className="h-[5px] leading-[5px]">{() => "100"}</MatrixRow>
              <MatrixRow label="Listen" className="h-[11px] leading-[5px]">{(i) => <PadButton name={`Listen ${i}`} />}</MatrixRow>
              <MatrixRow label="Note on" className="h-[6px] leading-[5px]">{() => <Led color="bg-[#10a018]" />}</MatrixRow>
            </tbody>
          </table>
        </Group>
      </div>
    </Plugin>
  );
}

function Processor({ ids, className }: { ids: number[]; className: string }) {
  const cols = "grid grid-cols-[5fr_16fr_19fr_26fr_18fr_14fr]";
  return (
    <div className={`min-w-0 flex-1 whitespace-nowrap ${className}`}>
      <div className={`${cols} justify-items-center leading-[5px]`}>
        <span>#</span><span>In L/R</span><span>Pre-delay</span><span>Source</span><span>Makeup</span><span>Out L/R</span>
      </div>
      {ids.map((n) => (
        <div key={n} className={`${cols} justify-items-center leading-[5px]`}>
          <span className="mt-[3px]">{n}</span>
          <div className="flex w-full min-w-0 flex-col items-center">
            <Knob name="In" size="size-[12px]" turn={135} />
            <span>{n < 2 ? "-100 %" : "100 %"}</span>
          </div>
          <div className="flex w-full min-w-0 flex-col items-center">
            <Knob name="Pre-delay" size="size-[12px]" turn={-135} color="#147098" />
            <span>0.000 ms</span>
          </div>
          <div className="flex w-full min-w-0 flex-col items-center pt-[3px]">
            <Pick name="Source" value="None" />
            <span className="mt-[3px] flex items-center gap-[2px]"><Led color="bg-[#10a018]" />Active</span>
          </div>
          <div className="flex w-full min-w-0 flex-col items-center">
            <Knob name="Makeup" size="size-[12px]" turn={60} />
            <span>0.00 dB</span>
          </div>
          <div className="flex w-full min-w-0 flex-col items-center">
            <Knob name="Out" size="size-[12px]" turn={135} />
            <span>{n === 0 ? "-100 %" : "100 %"}</span>
          </div>
        </div>
      ))}
    </div>
  );
}

function Reverb() {
  return (
    <Plugin name="INH1S" className="flex-[289] self-start">
      <div className="flex h-[143px] gap-px">
        <div className="flex min-w-0 flex-[195] flex-col gap-px">
          <Group title="Impulse Response" className="h-[91px]" body="flex flex-col pt-[2px] px-px">
            <div className="flex h-[8px] items-center gap-[2px] pl-px leading-[5px]">
              <span>File:</span>
              <Pick name="File" value="File 1" width="w-[14px]" />
              <span>FFT frame:</span>
              <Pick name="FFT frame" value="32767" width="w-[17px]" />
            </div>
            <ImpulseGraph />
            <div className="flex">
              <div className="flex flex-[34] flex-col items-center">
                <span className="leading-[5px]">Reverse</span>
                <span className="mt-[2px] flex"><PadButton name="Reverse" /></span>
                <span className="mt-[4px]"><Led color="bg-[#10a018]" /></span>
              </div>
              <Param label="Head cut" value="0.0" unit="ms" size="size-[12px]" turn={-135} grow="flex-[34]" />
              <Param label="Tail cut" value="1455" unit="ms" size="size-[12px]" turn={-110} grow="flex-[34]" />
              <Param label="Fade in" value="0.0" unit="ms" color={YELLOW} size="size-[12px]" turn={-135} grow="flex-[32]" />
              <Param label="Fade out" value="265" unit="ms" color={YELLOW} size="size-[12px]" turn={-110} grow="flex-[32]" />
              <div className="flex flex-[26] flex-col items-center">
                <span className="leading-[5px]">Listen</span>
                <span className="mt-[2px] flex"><PadButton name="Listen" /></span>
                <span className="mt-[4px]"><Led color="bg-[#10a018]" /></span>
              </div>
            </div>
          </Group>
          <Group title="Processors" className="flex-1" body="flex pt-[3px]">
            <Processor ids={[0, 1]} className="border-r border-[#777a90]" />
            <Processor ids={[2, 3]} className="" />
          </Group>
        </div>
        <Group title="Output" className="flex-[28]" body="flex flex-col items-center pt-[4px] whitespace-nowrap">
          <span className="leading-[5px]">Dry Pan</span>
          <div className="flex w-full">
            <Param label="L" value="-100" unit="%" color={RED} size="size-[11px]" turn={-135} />
            <Param label="R" value="100" unit="%" color={CYAN} size="size-[11px]" turn={135} />
          </div>
          <div className="mt-[2px] flex w-full flex-col items-center gap-[2px]">
            <Param label="Predelay" value="0.000 ms" color="#147098" turn={-135} grow="flex-none" />
            <Param label="Dry" value="0.00 dB" color="#d8d010" turn={80} grow="flex-none w-full border-t border-[#777a90]" />
            <Param label="Wet" value="0.00 dB" color="#d8d010" turn={80} grow="flex-none" />
            <Param label="Output" value="0.00 dB" turn={80} grow="flex-none" />
          </div>
        </Group>
      </div>
    </Plugin>
  );
}

export default function App() {
  return (
    <main className="bg-white pt-[9px] pb-[11px] font-['Noto_Sans','DejaVu_Sans',sans-serif] text-[4px] leading-[5px] text-[#c6cae2]">
      <div className="flex items-start gap-[39px] pr-[10px] pl-[9px]">
        <Equalizer />
        <Compressor />
      </div>
      <div className="mt-[21px] flex gap-[63px] pr-[25px] pl-[24px]">
        <Limiter />
        <Trigger />
      </div>
      <div className="mt-[23px] flex gap-[59px] pr-[32px] pl-[20px]">
        <Sampler />
        <Reverb />
      </div>
    </main>
  );
}
